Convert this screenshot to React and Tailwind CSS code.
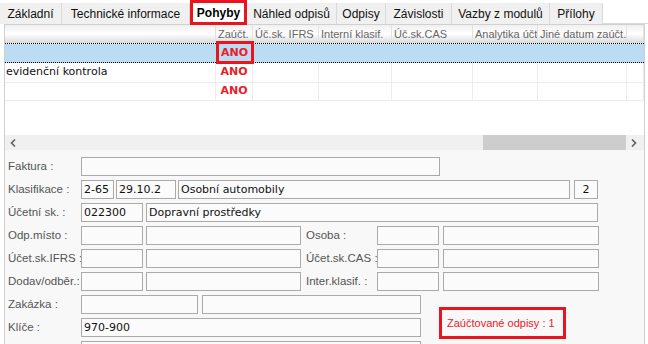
import React from "react";

const tabs = [
  { t: "Základní", w: 62 },
  { t: "Technické informace", w: 128 },
  { t: "Pohyby", w: 57, sel: true },
  { t: "Náhled odpisů", w: 90 },
  { t: "Odpisy", w: 49 },
  { t: "Závislosti", w: 66 },
  { t: "Vazby z modulů", w: 98 },
  { t: "Přílohy", w: 53 },
];

const cols = [
  { h: "", w: 211 },
  { h: "Zaúčt.", w: 37 },
  { h: "Úč.sk. IFRS", w: 66 },
  { h: "Interní klasif.", w: 73 },
  { h: "Úč.sk.CAS", w: 81 },
  { h: "Analytika účt", w: 65 },
  { h: "Jiné datum zaúčt.", w: 89 },
  { h: "", w: 17 },
];

const rows = [
  { first: "", sel: true, h: "h-[19px]" },
  { first: "evidenční kontrola", h: "h-[20px]" },
  { first: "", h: "h-[18px]" },
];

function Field({ w, v, center, ml = "ml-0" }) {
  return (
    <div
      className={`${ml} h-[19px] shrink-0 border border-[#aaaaaa] bg-[#fbfbfb] flex items-center text-[11px] text-[#111] font-['DejaVu_Sans',sans-serif] leading-none overflow-hidden ${
        center ? "justify-center" : "pl-[2px]"
      }`}
      style={{ width: w }}
    >
      {v}
    </div>
  );
}

function Label({ children, w = 73 }) {
  return (
    <div
      className="shrink-0 text-[11.5px] text-[#555] font-['Liberation_Sans',sans-serif] whitespace-nowrap leading-none"
      style={{ width: w }}
    >
      {children}
    </div>
  );
}

function QuadRow({ l1, l2 }) {
  return (
    <div className="flex items-center h-[19px]">
      <Label>{l1}</Label>
      <Field w={62} />
      <Field w={155} ml="ml-[3px]" />
      <div className="ml-[5px] w-[71px] shrink-0 text-[11.5px] text-[#555] font-['Liberation_Sans',sans-serif] whitespace-nowrap">
        {l2}
      </div>
      <Field w={62} />
      <Field w={156} ml="ml-[4px]" />
    </div>
  );
}

export default function App() {
  return (
    <div className="relative w-[648px] h-[344px] overflow-hidden bg-white font-['Liberation_Sans',sans-serif]">
      {/* Tabs */}
      <div className="flex h-[24px] w-[648px]">
        {tabs.map((tb) => (
          <div
            key={tb.t}
            className={`shrink-0 flex items-center justify-center whitespace-nowrap ${
              tb.sel
                ? "bg-white border-[3px] border-[#e8141e] h-[25px] font-bold text-[12px] text-black z-10"
                : "bg-[#f0f0f0] border-r border-[#d9d9d9] mt-[3px] h-[21px] text-[12px] text-[#111]"
            }`}
            style={{ width: tb.w }}
          >
            {tb.t}
          </div>
        ))}
        <div className="flex-1 border-b border-[#d9d9d9]" />
      </div>

      {/* Panel */}
      <div className="ml-[4px] w-[641px] border-l border-r border-t border-[#d0d0d0] flex flex-col">
        {/* Grid */}
        <div className="h-[110px] bg-white flex flex-col">
          <div className="flex h-[19px] bg-gradient-to-b from-[#f0f0f0] via-white to-[#dadada] border-b border-dotted border-black">
            {cols.map((c, i) => (
              <div
                key={i}
                className="shrink-0 border-r border-[#e2e2e2] text-[11px] text-[#666] pl-[2px] flex items-center whitespace-nowrap overflow-hidden"
                style={{ width: c.w }}
              >
                {c.h}
              </div>
            ))}
          </div>
          {rows.map((r, ri) => (
            <div
              key={ri}
              className={`flex ${r.h} ${
                r.sel ? "bg-[#bcdcf4] border-b border-dotted border-black" : "border-b border-[#ececec]"
              }`}
            >
              {cols.map((c, i) => (
                <div
                  key={i}
                  className={`shrink-0 flex items-center whitespace-nowrap overflow-hidden text-[11px] font-['DejaVu_Sans',sans-serif] ${
                    r.sel ? "" : "border-r border-[#ececec]"
                  } ${i === 1 ? "justify-center text-[#e8202a] font-bold" : "pl-[1px] text-[#111]"}`}
                  style={{ width: c.w }}
                >
                  {i === 0 ? r.first : i === 1 ? "ANO" : ""}
                </div>
              ))}
            </div>
          ))}
        </div>

        {/* Horizontal scrollbar */}
        <div className="h-[15px] bg-[#f0f0f0] flex items-center">
          <div className="w-[16px] flex justify-center text-[#606060]">
            <svg width="6" height="8" viewBox="0 0 6 8"><path d="M5 0.5 L1.5 4 L5 7.5" stroke="#606060" strokeWidth="1.6" fill="none" /></svg>
          </div>
          <div className="w-[462px]" />
          <div className="w-[143px] h-[15px] bg-[#cdcdcd]" />
          <div className="w-[16px] flex justify-center">
            <svg width="6" height="8" viewBox="0 0 6 8"><path d="M1 0.5 L4.5 4 L1 7.5" stroke="#606060" strokeWidth="1.6" fill="none" /></svg>
          </div>
        </div>

        {/* Form */}
        <div className="bg-[#f8f8f8] h-[200px] pt-[7px] pl-[3px] flex flex-col gap-[4px]">
          <div className="flex items-center h-[19px]">
            <Label>Faktura :</Label>
            <Field w={359} />
          </div>
          <div className="flex items-center h-[19px]">
            <Label>Klasifikace :</Label>
            <Field w={33} v="2-65" />
            <Field w={60} v="29.10.2" ml="ml-[2px]" />
            <Field w={392} v="Osobní automobily" ml="ml-[2px]" />
            <Field w={24} v="2" center ml="ml-[4px]" />
          </div>
          <div className="flex items-center h-[19px]">
            <Label>Účetní sk. :</Label>
            <Field w={62} v="022300" />
            <Field w={452} v="Dopravní prostředky" ml="ml-[3px]" />
          </div>
          <QuadRow l1="Odp.místo :" l2="Osoba :" />
          <QuadRow l1="Účet.sk.IFRS :" l2="Účet.sk.CAS :" />
          <QuadRow l1="Dodav/odběr.:" l2="Inter.klasif. :" />
          <div className="flex items-start">
            <div className="flex flex-col gap-[4px]">
              <div className="flex items-center h-[19px]">
                <Label>Zakázka :</Label>
                <Field w={117} />
                <Field w={219} ml="ml-[4px]" />
              </div>
              <div className="flex items-center h-[19px]">
                <Label>Klíče :</Label>
                <Field w={340} v="970-900" />
              </div>
              <div className="flex items-center h-[19px]">
                <Label></Label>
                <Field w={340} />
              </div>
            </div>
            <div className="ml-[18px] mt-[12px] w-[127px] h-[32px] border-[3px] border-[#e8141e] flex items-center pl-[5px] text-[11px] text-[#e8202a] whitespace-nowrap">
              Zaúčtované odpisy : 1
            </div>
          </div>
        </div>
      </div>

      {/* Highlight around ANO */}
      <div className="absolute left-[216px] top-[41px] w-[38px] h-[23px] border-[3px] border-[#e8141e]" />
    </div>
  );
}
